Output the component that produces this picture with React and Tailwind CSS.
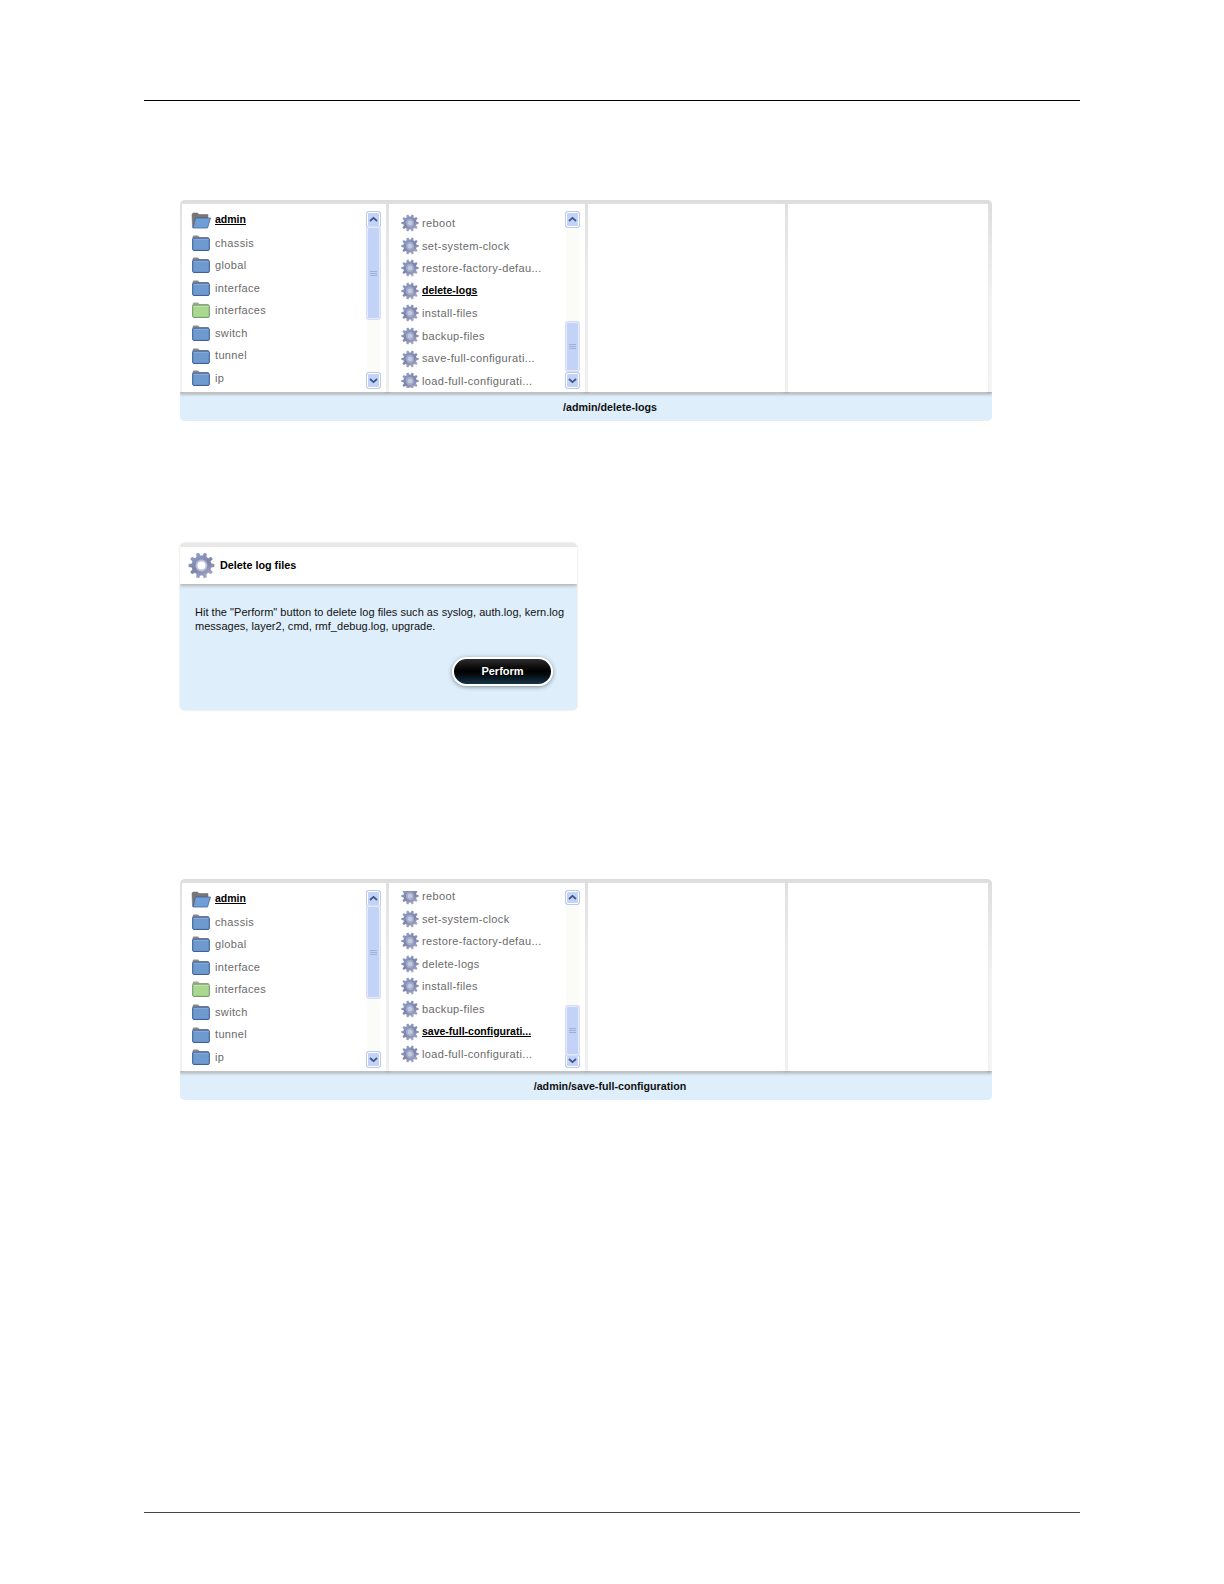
import React from 'react';

const FONT = "font-['Liberation_Sans',Arial,sans-serif]";

// cog outline, ten teeth
const gearPath = (() => {
  const pts = [];
  const teeth = 10;
  for (let i = 0; i < teeth; i++) {
    const a = (i / teeth) * Math.PI * 2;
    const step = (Math.PI * 2) / teeth;
    [[-0.32, 7.4], [-0.19, 9.6], [0.19, 9.6], [0.32, 7.4]].forEach(([o, r]) => {
      const t = a + o * step;
      pts.push(`${(10 + r * Math.cos(t)).toFixed(2)} ${(10 + r * Math.sin(t)).toFixed(2)}`);
    });
  }
  return 'M' + pts.join('L') + 'Z';
})();

const GearIcon = ({ className, id, hole }) => (
  <svg className={className} viewBox="0 0 20 20">
    <defs>
      <linearGradient id={id} x1="0.2" y1="0" x2="0.7" y2="1">
        <stop offset="0" stopColor="#8fa3cc" />
        <stop offset="0.55" stopColor="#7d83a8" />
        <stop offset="1" stopColor="#a9aecb" />
      </linearGradient>
    </defs>
    <path d={gearPath} fill={`url(#${id})`} />
    <circle cx="10" cy="10" r="4.4" fill={hole ? '#b9bfd6' : '#a3adcb'} />
    <circle cx="10" cy="10" r={hole ? 3 : 2.6} fill={hole ? '#ffffff' : '#c3cade'} />
  </svg>
);

const FolderIcon = ({ green, open }) => {
  if (open) {
    return (
      <svg className="w-[20px] h-[17px] shrink-0 -ml-[1px]" viewBox="0 0 20 17">
        <path d="M1 2.5 L2 1 H6.5 L8 2.5 H17 V6 H5 L3 15.5 H1.5 Z" fill="#77777a" stroke="#666" strokeWidth="0.5" />
        <path d="M4.5 6 H19.5 L16.5 16 H2 Z" fill="#6f9fd8" stroke="#47648f" strokeWidth="0.8" />
      </svg>
    );
  }
  return (
    <svg className="w-[18px] h-[16px] shrink-0" viewBox="0 0 18 16">
      <path d="M0.5 2 L1.5 0.6 H6 L7.5 2 H16.5 V5 H0.5 Z" fill={green ? '#a3a79b' : '#8b8b8e'} />
      <rect x="0.7" y="3.2" width="16.6" height="12.2" rx="1" fill={green ? '#a9d88f' : '#6f9ad0'} stroke={green ? '#6f8f66' : '#34568c'} strokeWidth="1" />
      <path d="M1.5 4.2 H16.5" stroke={green ? '#cdebb9' : '#96b8e2'} strokeWidth="0.8" />
    </svg>
  );
};

const ScrollButton = ({ up }) => (
  <div className="h-[15px] w-[13px] rounded-[2px] bg-[#c3d3f7] border border-white shadow-[0_0_0_1px_#bcc9e8] flex items-center justify-center">
    <svg className="w-[9px] h-[7px]" viewBox="0 0 9 7">
      <path d={up ? 'M1 5 L4.5 1.8 L8 5' : 'M1 2 L4.5 5.2 L8 2'} fill="none" stroke="#3c5488" strokeWidth="1.7" />
    </svg>
  </div>
);

const Scrollbar = ({ thumbClass }) => (
  <div className="w-[13px] shrink-0 flex flex-col bg-[#fbfbf8]">
    <ScrollButton up />
    <div className="flex-1 relative">
      <div className={`w-[13px] rounded-[2px] bg-[#c3d3f7] border border-[#e4eaf9] shadow-[0_0_0_1px_#d5def5] flex items-center justify-center ${thumbClass}`}>
        <div className="w-[7px] h-[5px] border-y border-[#9fb0d8] flex items-center">
          <div className="w-full h-px bg-[#9fb0d8]" />
        </div>
      </div>
    </div>
    <ScrollButton />
  </div>
);

const folders = ['admin', 'chassis', 'global', 'interface', 'interfaces', 'switch', 'tunnel', 'ip'];
const actions = [
  'reboot',
  'set-system-clock',
  'restore-factory-defau...',
  'delete-logs',
  'install-files',
  'backup-files',
  'save-full-configurati...',
  'load-full-configurati...',
];

const columnShadow = 'shadow-[0_0_4px_#e6e6e6]';

const rowText = (active) =>
  active ? 'text-[10.5px] text-black font-bold underline' : 'text-[11px] tracking-[0.35px] text-[#6a6a6a]';

const BrowserPanel = ({ name, path, selected, listClass, thumbClass, className }) => (
  <div className={`w-[812px] h-[221px] ml-[36px] rounded-[5px] bg-[#f0f0f0] flex flex-col overflow-hidden ${className}`}>
    <div className="h-[192px] shrink-0 flex gap-[3px] pt-[4px] pl-[2px] pr-[4px] bg-gradient-to-b from-[#dcdcdc] via-[#f4f4f4] to-[#f7f7f7] shadow-[0_2px_3px_#9a9a9a] z-10">
      {/* Folder column */}
      <div className={`w-[204px] bg-white flex pl-[10px] pr-[6px] pt-[8px] pb-[4px] ${columnShadow}`}>
        <div className="flex-1 flex flex-col -mt-[3px]">
          {folders.map((folder, i) => (
            <div key={folder} className="h-[22.55px] shrink-0 flex items-center">
              <div className="w-[23px] shrink-0">
                <FolderIcon green={folder === 'interfaces'} open={i === 0} />
              </div>
              <span className={rowText(i === 0)}>{folder}</span>
            </div>
          ))}
        </div>
        <Scrollbar thumbClass="h-[92px]" />
      </div>

      {/* Action column */}
      <div className={`w-[196px] bg-white flex pl-[12px] pr-[6px] pt-[8px] pb-[4px] ${columnShadow}`}>
        <div className="flex-1 overflow-hidden">
          <div className={`flex flex-col ${listClass}`}>
            {actions.map((action, i) => (
              <div key={action} className="h-[22.55px] flex items-center shrink-0">
                <div className="w-[21px] shrink-0">
                  <GearIcon id={`${name}-gear-${i}`} className="w-[18px] h-[18px]" />
                </div>
                <span className={`whitespace-nowrap ${rowText(action === selected)}`}>{action}</span>
              </div>
            ))}
          </div>
        </div>
        <Scrollbar thumbClass={thumbClass} />
      </div>

      <div className={`w-[197px] bg-white ${columnShadow}`} />
      <div className={`flex-1 bg-white ${columnShadow}`} />
    </div>
    <div className="flex-1 bg-[#deeefb] flex items-center justify-center pt-[2px] text-[10.7px] font-bold text-[#111]">
      <span className="ml-[48px]">{path}</span>
    </div>
  </div>
);

const App = () => (
  <div className={`${FONT} relative w-[1224px] h-[1584px] bg-white overflow-hidden`}>
    <div className="pl-[144px] pt-[100px] flex flex-col">
      <div className="w-[936px] h-px bg-black" />

      <BrowserPanel
        name="top"
        path="/admin/delete-logs"
        selected="delete-logs"
        listClass=""
        thumbClass="mt-[95px] h-[49px]"
        className="mt-[99px]"
      />

      {/* Delete dialog */}
      <div className="w-[397px] h-[167px] ml-[36px] mt-[122px] rounded-[5px] bg-[#deeefb] flex flex-col overflow-hidden shadow-[0_0_2px_#cfcfcf]">
        <div className="h-[41px] shrink-0 bg-white flex items-center pl-[8px] shadow-[0_2px_3px_#b5b5b5] border-t-4 border-[#e8e8e8]">
          <GearIcon id="dialog-gear" hole className="w-[27px] h-[27px]" />
          <span className="ml-[5px] text-[10.8px] font-bold text-black">Delete log files</span>
        </div>
        <div className="flex-1 flex flex-col pl-[15px] pr-[14px] pt-[21px]">
          <p className="text-[11px] leading-[14px] tracking-[0.03px] text-[#111] whitespace-nowrap">
            Hit the "Perform" button to delete log files such as syslog, auth.log, kern.log
            <br />
            messages, layer2, cmd, rmf_debug.log, upgrade.
          </p>
          <div className="flex justify-end pr-[10px] mt-[24px]">
            <div className="w-[101px] h-[29px] rounded-full border-2 border-white bg-gradient-to-b from-[#2e2e2e] via-[#020202] to-[#12354a] shadow-[0_1px_4px_#7d8b96] flex items-center justify-center text-[11px] font-bold text-white">
              Perform
            </div>
          </div>
        </div>
      </div>

      <BrowserPanel
        name="bottom"
        path="/admin/save-full-configuration"
        selected="save-full-configurati..."
        listClass="-mt-[6px]"
        thumbClass="mt-[102px] h-[49px]"
        className="mt-[169px]"
      />
    </div>

    <div className="absolute left-[144px] top-[1512px] w-[936px] h-px bg-[#444]" />
  </div>
);

export default App;
